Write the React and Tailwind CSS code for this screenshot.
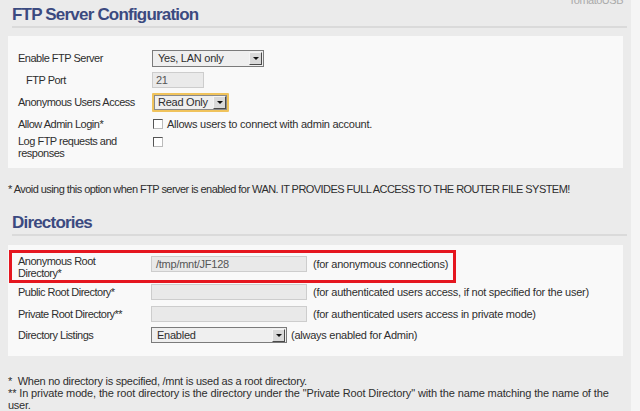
function Arrow() {
  return (
    <div className="w-[13px] h-[13px] bg-[#d9d9d9] border border-t-[#f4f4f4] border-l-[#f4f4f4] border-r-[#4a4a4a] border-b-[#4a4a4a] flex items-center justify-center">
      <div className="w-0 h-0 border-l-[3px] border-r-[3px] border-t-[3px] border-l-transparent border-r-transparent border-t-[#111]" />
    </div>
  );
}

function Check() {
  return <div className="w-[10px] h-[10px] bg-white border border-t-[#555] border-l-[#555] border-r-[#bbb] border-b-[#bbb]" />;
}

export default function App() {
  return (
    <div className="w-[640px] h-[411px] overflow-hidden bg-[#f5f5f5] flex">
      <div className="relative w-[631px] h-[411px] bg-[#ebebeb] font-['Liberation_Sans',Arial,sans-serif] text-[11px] leading-[12px] tracking-[-0.25px] text-[#2e2e2e]">
        <div className="absolute right-[8px] top-[-6px] text-[#aaa] tracking-[-0.5px]">TomatoUSB</div>

        {/* Title 1 */}
        <div className="pt-[5px] pl-[12px] h-[25px] text-[17px] leading-[20px] font-bold tracking-[-0.8px] text-[#3b4a80]">
          FTP Server Configuration
        </div>
        <div className="mt-[1px] ml-[12px] mr-[4px] h-[2px] bg-[#dadada]" />

        {/* Box 1 */}
        <div className="mt-[8px] ml-[8px] w-[615px] bg-[#f9f9f9] pt-[11px] pb-[9px] pl-[10px]">
          <div className="flex items-center h-[22px]">
            <div className="w-[134px] tracking-[-0.5px]">Enable FTP Server</div>
            <div className="w-[112px] h-[17px] border border-[#7b7b7b] bg-[#efefef] flex items-center justify-between pl-[5px] pr-[1px]">
              <span>Yes, LAN only</span>
              <Arrow />
            </div>
          </div>
          <div className="flex items-center h-[22px]">
            <div className="w-[134px] pl-[8px] tracking-[-0.5px]">FTP Port</div>
            <div className="w-[52px] h-[16px] border border-[#cdcdcd] bg-[#eaeaea] flex items-center pl-[3px] text-[#555]">21</div>
          </div>
          <div className="flex items-center h-[22px]">
            <div className="w-[134px] tracking-[-0.5px]">Anonymous Users Access</div>
            <div className="w-[77px] h-[19px] border-2 border-[#f0c35c] rounded-[1px]">
              <div className="w-full h-full border border-[#8a8a8a] bg-[#efefef] flex items-center justify-between pl-[3px]">
                <span>Read Only</span>
                <Arrow />
              </div>
            </div>
          </div>
          <div className="flex items-center h-[22px]">
            <div className="w-[135px] tracking-[-0.5px]">Allow Admin Login*</div>
            <Check />
            <span className="ml-[4px]">Allows users to connect with admin account.</span>
          </div>
          <div className="flex items-start h-[24px]">
            <div className="w-[135px] tracking-[-0.5px]">Log FTP requests and<br />responses</div>
            <div className="mt-[2px]"><Check /></div>
          </div>
        </div>

        <div className="mt-[15px] pl-[8px] whitespace-nowrap tracking-[-0.55px]">
          * Avoid using this option when FTP server is enabled for WAN. IT PROVIDES FULL ACCESS TO THE ROUTER FILE SYSTEM!
        </div>

        {/* Title 2 */}
        <div className="mt-[18px] pl-[12px] h-[20px] text-[17px] leading-[20px] font-bold tracking-[-0.8px] text-[#3b4a80]">
          Directories
        </div>
        <div className="mt-[1px] ml-[12px] mr-[4px] h-[2px] bg-[#dadada]" />

        {/* Box 2 */}
        <div className="relative mt-[9px] ml-[8px] w-[615px] bg-[#f9f9f9] pt-[8px] pb-[10px] pl-[10px]">
          <div className="flex items-start h-[28px]">
            <div className="w-[133px] pt-[2px] tracking-[-0.5px]">Anonymous Root<br />Directory*</div>
            <div className="mt-[3px] w-[156px] h-[16px] border border-[#cdcdcd] bg-[#e9e9e9] flex items-center pl-[4px] text-[#555]">/tmp/mnt/JF128</div>
            <span className="ml-[6px] mt-[5px]">(for anonymous connections)</span>
          </div>
          <div className="flex items-center h-[22px]">
            <div className="w-[133px] tracking-[-0.5px]">Public Root Directory*</div>
            <div className="w-[156px] h-[16px] border border-[#cdcdcd] bg-[#e9e9e9]" />
            <span className="ml-[6px]">(for authenticated users access, if not specified for the user)</span>
          </div>
          <div className="flex items-center h-[21px]">
            <div className="w-[133px] tracking-[-0.5px]">Private Root Directory**</div>
            <div className="w-[156px] h-[16px] border border-[#cdcdcd] bg-[#e9e9e9]" />
            <span className="ml-[6px]">(for authenticated users access in private mode)</span>
          </div>
          <div className="flex items-center h-[22px]">
            <div className="w-[133px] tracking-[-0.5px]">Directory Listings</div>
            <div className="w-[136px] h-[16px] border border-[#7b7b7b] bg-[#efefef] flex items-center justify-between pl-[5px] pr-[1px]">
              <span>Enabled</span>
              <Arrow />
            </div>
            <span className="ml-[4px]">(always enabled for Admin)</span>
          </div>
          <div className="absolute left-[1px] top-[5px] w-[447px] h-[33px] border-[3px] border-[#e5161f]" />
        </div>

        <div className="mt-[19px] pl-[8px] whitespace-nowrap">
          <div>*&nbsp; When no directory is specified, /mnt is used as a root directory.</div>
          <div className="tracking-[-0.13px]">** In private mode, the root directory is the directory under the "Private Root Directory" with the name matching the name of the</div>
          <div>user.</div>
        </div>
      </div>
    </div>
  );
}
